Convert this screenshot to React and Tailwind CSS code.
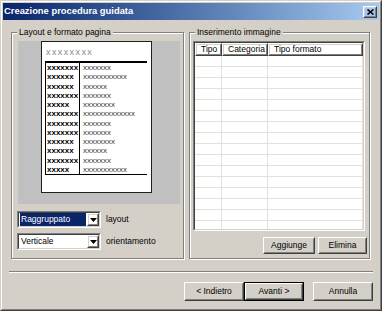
const ROWS = [
  ['xxxxxxx', 'xxxxxxx'],
  ['xxxxxx', 'xxxxxxxxxxx'],
  ['xxxxxx', 'xxxxxx'],
  ['xxxxxxx', 'xxxxxxx'],
  ['xxxxx', 'xxxxxxxx'],
  ['xxxxxxx', 'xxxxxxxxxxxxx'],
  ['xxxxxxx', 'xxxxxxx'],
  ['xxxxxxx', 'xxxxxxx'],
  ['xxxxxx', 'xxxxxxxx'],
  ['xxxxxx', 'xxxxxx'],
  ['xxxxxxx', 'xxxxxxx'],
  ['xxxxx', 'xxxxxxxxxxx'],
]

const COLS = [
  { label: 'Tipo', w: 'w-[27px]' },
  { label: 'Categoria', w: 'w-[46px]' },
  { label: 'Tipo formato', w: 'w-[95px]' },
]

function Button({ children, className = '', isDefault = false }) {
  const face = (
    <div className="flex h-full w-full items-center justify-center border border-t-white border-l-white border-r-[#404040] border-b-[#404040]">
      <div className="flex h-full w-full items-center justify-center border border-t-[#d4d0c8] border-l-[#d4d0c8] border-r-[#808080] border-b-[#808080]">
        {children}
      </div>
    </div>
  )
  if (isDefault) {
    return <div className={`border border-black ${className}`}>{face}</div>
  }
  return <div className={className}>{face}</div>
}

function GroupBox({ label, className = '', children }) {
  return (
    <div
      className={`relative border border-[#808080] shadow-[inset_1px_1px_0_white,1px_1px_0_white] ${className}`}
    >
      <span className="absolute -top-[7px] left-[5px] bg-[#d4d0c8] px-[2px] leading-[12px]">
        {label}
      </span>
      {children}
    </div>
  )
}

function Combo({ text, selected }) {
  return (
    <div className="h-[17px] w-[84px] border border-t-[#808080] border-l-[#808080] border-r-white border-b-white">
      <div className="flex h-full w-full border border-t-[#404040] border-l-[#404040] border-r-[#d4d0c8] border-b-[#d4d0c8] bg-white">
        <div className="flex flex-1 items-center pl-[1px]">
          <span
            className={`flex h-[13px] w-[66px] items-center px-[1px] leading-none ${
              selected ? 'bg-[#0a246a] text-white' : 'text-black'
            }`}
          >
            {text}
          </span>
        </div>
        <Button className="h-[13px] w-[12px]">
          <svg width="7" height="4" viewBox="0 0 7 4">
            <path d="M0 0h7L3.5 4z" fill="black" />
          </svg>
        </Button>
      </div>
    </div>
  )
}

function Paper() {
  return (
    <div className="ml-[23px] mt-[6px] h-[152px] w-[111px] border border-[#202020] bg-white pl-[3px] pr-[4px]">
      <div className="mt-[5px] pl-[1px] text-[9px] leading-[10px] tracking-[1.4px] text-[#8a8a8a]">
        xxxxxxxx
      </div>
      <div className="mt-[4px] border-t-2 border-l border-b border-black">
        {ROWS.map((r, i) => (
          <div key={i} className="flex h-[9.25px] items-center leading-none">
            <div className="w-[34px] shrink-0 overflow-hidden border-r border-black pl-[1px] text-[8px] font-bold leading-[9.25px]">
              {r[0]}
            </div>
            <div className="pl-[3px] text-[8px] leading-[9.25px] text-[#3a3a3a]">{r[1]}</div>
          </div>
        ))}
      </div>
    </div>
  )
}

function ListView() {
  return (
    <div className="ml-[3px] mt-[8px] h-[190px] w-[172px] border border-t-[#808080] border-l-[#808080] border-r-white border-b-white">
      <div className="h-full w-full overflow-hidden border border-t-[#404040] border-l-[#404040] border-r-[#d4d0c8] border-b-[#d4d0c8] bg-white">
        <div className="flex h-[13px]">
          {COLS.map((c) => (
            <Button key={c.label} className={`h-[13px] shrink-0 ${c.w}`}>
              <span className="w-full pl-[4px] text-left leading-none">{c.label}</span>
            </Button>
          ))}
        </div>
        {Array.from({ length: 16 }).map((_, i) => (
          <div key={i} className="flex h-[11px] border-b border-[#e3e1dc]">
            {COLS.map((c) => (
              <div key={c.label} className={`h-full shrink-0 border-r border-[#e3e1dc] ${c.w}`} />
            ))}
          </div>
        ))}
      </div>
    </div>
  )
}

export default function App() {
  return (
    <div className="h-[311px] w-[382px] border border-t-[#d4d0c8] border-l-[#d4d0c8] border-r-[#404040] border-b-[#404040] bg-[#d4d0c8] font-['Liberation_Sans',Arial,sans-serif] text-[8.5px] text-black">
      <div className="flex h-full flex-col border border-t-white border-l-white border-r-[#808080] border-b-[#808080] p-[1px]">
        {/* title bar */}
        <div className="flex h-[17px] shrink-0 items-center justify-between bg-gradient-to-r from-[#0a246a] to-[#a6caf0] pl-[1px] pr-[2px]">
          <span className="text-[9.4px] font-bold text-white">Creazione procedura guidata</span>
          <Button className="h-[12px] w-[14px]">
            <svg width="7" height="6" viewBox="0 0 7 6">
              <path d="M0.5 0.5l6 5M6.5 0.5l-6 5" stroke="black" strokeWidth="1.6" />
            </svg>
          </Button>
        </div>

        {/* groups */}
        <div className="mt-[12px] flex pl-[8px]">
          <GroupBox label="Layout e formato pagina" className="h-[227px] w-[173px]">
            <div className="ml-[6px] mt-[8px] h-[163px] w-[162px] bg-[#c0c0c0]">
              <Paper />
            </div>
            <div className="ml-[5px] mt-[7px] flex items-center gap-[5px]">
              <Combo text="Raggruppato" selected />
              <span>layout</span>
            </div>
            <div className="ml-[5px] mt-[5px] flex items-center gap-[5px]">
              <Combo text="Verticale" />
              <span>orientamento</span>
            </div>
          </GroupBox>

          <GroupBox label="Inserimento immagine" className="ml-[5px] h-[227px] w-[181px]">
            <ListView />
            <div className="mt-[6px] flex justify-end gap-[3px] pr-[2px]">
              <Button className="h-[17px] w-[52px]">Aggiunge</Button>
              <Button className="h-[17px] w-[49px]">Elimina</Button>
            </div>
          </GroupBox>
        </div>

        {/* separator */}
        <div className="ml-[6px] mt-[12px] h-[2px] w-[364px] border-t border-b border-t-[#808080] border-b-white" />

        {/* wizard buttons */}
        <div className="mt-[9px] flex justify-end pr-[6px]">
          <Button className="h-[19px] w-[60px]">&lt; Indietro</Button>
          <Button isDefault className="h-[19px] w-[60px]">Avanti &gt;</Button>
          <Button className="ml-[9px] h-[19px] w-[60px]">Annulla</Button>
        </div>
      </div>
    </div>
  )
}
